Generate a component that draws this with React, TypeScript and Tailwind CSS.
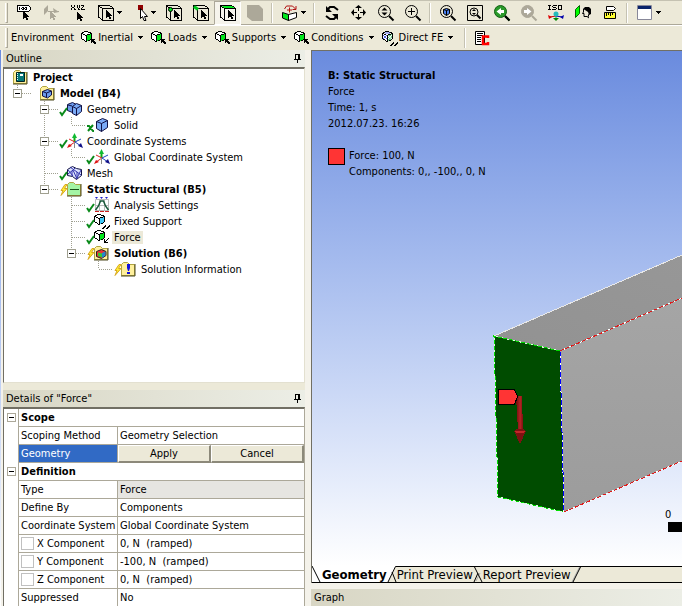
import { FC, ReactElement, ReactNode, useState } from "react";

interface IChildrenProps {
  children?: ReactNode;
}

interface IToolProps {
  label: string;
  icon: ReactElement;
}

interface ITreeItem {
  label: string;
  icon: ReactElement;
  guides: string[];
  status?: string;
  bold?: boolean;
  selected?: boolean;
}

interface IDetailRow {
  label: string;
  value: string;
  checkable?: boolean;
  readOnly?: boolean;
}

const PIXEL_COLORS: Record<string, string> = {
  "#": "#000000",
  g: "#00e81c",
  w: "#ffffff",
  c: "#40c8f8",
  b: "#5060e0",
  t: "#70c890",
  r: "#900000",
  s: "#aca899"
};

const Icon: FC<IChildrenProps> = ({ children }): ReactElement => (
  <svg
    width="16"
    height="16"
    viewBox="0 0 16 16"
    fill="none"
    stroke="#000"
    className="block shrink-0 overflow-visible"
    aria-hidden="true"
  >
    {children}
  </svg>
);

// Draws small bitmaps, one character for each pixel
const Pixels: FC<{ rows: string[] }> = ({ rows }): ReactElement => (
  <g stroke="none" shapeRendering="crispEdges">
    {rows.map((row, y) =>
      row
        .split("")
        .map((key, x) =>
          PIXEL_COLORS[key] ? (
            <rect key={`${x}-${y}`} x={x} y={y} width="1" height="1" fill={PIXEL_COLORS[key]} />
          ) : null
        )
    )}
  </g>
);

const cursorRows: string[] = [
  "#......",
  "##.....",
  "###....",
  "####...",
  "#####..",
  "######.",
  "####...",
  "#..##..",
  "...##.."
];

const Caret: FC = (): ReactElement => (
  <svg
    width="5"
    height="3"
    viewBox="0 0 5 3"
    shapeRendering="crispEdges"
    className="shrink-0"
    aria-hidden="true"
  >
    <path d="M0 0h5v1H0zM1 1h3v1H1zM2 2h1v1H2z" />
  </svg>
);

const TagIcon = (
  <Icon>
    <Pixels
      rows={[
        "############..",
        "#wwwwwwwwwww#.",
        "#w#ww##w##www#",
        "#w#w#w##w#www#",
        "#w#ww##w##www#",
        "#wwwwwwwwwww#.",
        "############.."
      ]}
    />
    <g transform="translate(6 6)">
      <Pixels rows={cursorRows} />
    </g>
  </Icon>
);

const GhostPickIcon = (
  <Icon>
    <path d="M0 4l4-4v6l-4 4zM4 6h11v1H4zM9 3l6 4-5 1z" fill="#aca899" stroke="none" />
    <g transform="translate(6 6)">
      <Pixels rows={cursorRows.map((row) => row.replace(/#/g, "s"))} />
    </g>
  </Icon>
);

const CoordsIcon = (
  <Icon>
    <Pixels
      rows={[
        "#..#..#.#.###",
        "#..#..#.#...#",
        ".##...#.#..#.",
        "#..#...#..#..",
        "#..##..##.####"
      ]}
    />
    <g transform="translate(6 7)">
      <Pixels rows={cursorRows} />
    </g>
  </Icon>
);

const SelectBox: FC<IChildrenProps> = ({ children }): ReactElement => (
  <Icon>
    <Pixels
      rows={[
        "############....",
        "##..........##..",
        "#.##..........#.",
        "#...############",
        "#...#..........#",
        "#...#..........#",
        "#...#..........#",
        "#...#..........#",
        "#...#..........#",
        "#...#..........#",
        "#...#..........#",
        "#...#..........#",
        "##..#..........#",
        "..#.#..........#",
        "...##..........#",
        "....############"
      ]}
    />
    {children}
    <g transform="translate(8 5)">
      <Pixels rows={cursorRows} />
    </g>
  </Icon>
);

const ArrowIcon = (
  <Icon>
    <Pixels rows={["......rrrrr", "......rrrrr", "......rrrrr", "......rrrrr", "......rrrrr"]} />
    <path d="M8.500 3.500v10l2-2 1.500 4h2l-1.500-4h3z" fill="#fff" />
  </Icon>
);

const BlockIcon = (
  <Icon>
    <path d="M0 0h12l4 4v12H5l-5-4z" fill="#aca899" stroke="none" />
  </Icon>
);

const RotateCubeIcon = (
  <Icon>
    <path d="M0.500 7.500l6 2v6l-6-2.500z" fill="#00e81c" />
    <path d="M6.500 9.500l8-2v5l-8 3z" fill="#fff" />
    <path d="M2.500 4l2-3h6l3 3M14 1v3.500h-3.500M7.500 2.500v5M5 5h5" stroke="#b01010" />
  </Icon>
);

const RotateIcon = (
  <Icon>
    <path d="M4 4l2-2h4l4 3M12 12l-2 2H6l-4-3" strokeWidth="2" />
    <path d="M2 1v6h6zM14 15V9H8z" fill="#000" stroke="none" />
  </Icon>
);

const PanIcon = (
  <Icon>
    <path d="M7.500 0l3.500 3H4zM7.500 15l3.500-3H4zM0 7.500L3 4v7zM15 7.500L12 4v7z" fill="#000" stroke="none" />
    <path d="M7.500 3v3M7.500 9v3M3 7.500h3M9 7.500h3" />
  </Icon>
);

const Lens: FC<IChildrenProps & { fill?: string; color?: string }> = ({
  children,
  fill = "none",
  color = "#000"
}): ReactElement => (
  <Icon>
    <circle cx="6.500" cy="6.500" r="6" fill={fill} stroke={color} />
    <path d="M11 11l4.500 4.500" stroke={color} strokeWidth="2" />
    {children}
  </Icon>
);

const BoxZoomIcon = (
  <Icon>
    <path d="M0.500 0.500h15v15H0.500z" />
    <circle cx="7" cy="7" r="4" />
    <path d="M10 10l3.500 3.500" strokeWidth="2" />
    <path d="M5 6l2-2 2 2zM5 8l2 2 2-2z" fill="#000" stroke="none" />
  </Icon>
);

const IsoIcon = (
  <Icon>
    <Pixels
      rows={[
        "###..####.####",
        ".#..#.....#..#",
        ".#...###..#..#",
        ".#......#.#..#",
        "###.####..####"
      ]}
    />
    <path d="M8 9v6" stroke="#088" />
    <path d="M8 11l-6 1" stroke="#c00" />
    <path d="M0 10l1 4 3-2z" fill="#d00" stroke="none" />
    <path d="M8 11l6 1" stroke="#00a" />
    <path d="M16 10l-1 4-3-2z" fill="#00a" stroke="none" />
    <path d="M5 13h6l-3 3z" fill="#080" stroke="none" />
    <circle cx="8" cy="9" r="2.500" fill="#2bb" stroke="none" />
  </Icon>
);

const LookAtIcon = (
  <Icon>
    <path d="M0.500 4.500l4-4v8l-4 4z" fill="#0f0" stroke="#060" />
    <path d="M8 4l2-2h4l2 2v5l-2 1-1-3-3-2z" fill="#000" stroke="none" />
    <path d="M8.500 4v3l-1 1.500h1.500v3h3l2 1.500M14 9l-1 3" />
  </Icon>
);

const RulerIcon = (
  <Icon>
    <path d="M4.500 1.500h7l2 2-2 2h-7z" fill="#fff" />
    <path d="M2.500 7.500h11v6h-11z" fill="#ff3" />
    <path d="M4.500 8v3M6.500 8v2M8.500 8v3M10.500 8v2" />
  </Icon>
);

const WindowIcon = (
  <Icon>
    <path d="M0.500 0.500h14v14H0.500z" fill="#fff" stroke="#889" />
    <path d="M1 1h13v3H1z" fill="#0a246a" stroke="none" />
  </Icon>
);

const cubeRows: string[] = [
  "...####........",
  ".##wwww###.....",
  "##wwwwwww##....",
  "#w##ww###f#....",
  "#www##ffff#....",
  "#wwww#ffff#....",
  "#wwww#ffff#....",
  "#wwww#ffff#....",
  ".##ww#fff#.....",
  "...#w#f##......",
  "....##........."
];

const LoadIcon: FC<{ face?: string; mark?: string; mesh?: boolean }> = ({
  face = "g",
  mark = "pointer",
  mesh
}): ReactElement => (
  <Icon>
    <g transform="translate(0 1)">
      <Pixels rows={cubeRows.map((row) => row.replace(/f/g, face))} />
    </g>
    {mesh && <path d="M1 5l4 4M1 9l4-4M3 3l5 0" stroke="#5060e0" />}
    {mesh && <path d="M6 6l4 3M6 9l4-4" stroke="#fff" />}
    {mark === "pointer" && (
      <g transform="translate(10 9)">
        <Pixels rows={["####..", "###...", "####..", "#.###.", "...##."]} />
      </g>
    )}
    {mark === "arrow" && (
      <g transform="translate(10 9)">
        <Pixels rows={["....#.", "#..#..", "#.#...", "##....", "####.."]} />
      </g>
    )}
    {mark === "hatch" && (
      <g transform="translate(8 12)">
        <Pixels rows={["...#...#", "..##..##", ".##..##.", "##..##.."]} />
      </g>
    )}
  </Icon>
);

const CommandIcon = (
  <Icon>
    <path d="M0.500 1.500h9v13h-9z" fill="#fff" />
    <path d="M2 3.500h6M2 5.500h6M2 7.500h4M2 9.500h4M2 11.500h4" />
    <path d="M13 8V6.500H8V14h5v-2" stroke="#f00" strokeWidth="2.500" />
  </Icon>
);

const Folder: FC<IChildrenProps & { fill?: string }> = ({
  children,
  fill = "#fff09c"
}): ReactElement => (
  <Icon>
    <path d="M0.500 3.500l2-2h4l2 2h5v11H0.500z" fill={fill} stroke="#b0a440" />
    <path d="M14 3v12H0" stroke="#4c4820" />
    {children}
  </Icon>
);

const cubeBody = (
  <>
    <path d="M2.500 4.500l6-3 5 2v7l-6 4-5-3z" fill="#7aaaf5" stroke="#114" />
    <path d="M2.500 4.500l5 2 6-3M7.500 6.500v8" stroke="#114" />
  </>
);

const ProjectIcon = (
  <Folder>
    <path d="M3.500 3.500h8v9h-8z" fill="#087878" stroke="#022" />
    <path d="M7 5h3v2H7z" fill="#fff" stroke="none" />
    <path d="M4.500 4v8" stroke="#dff" strokeDasharray="1 1" />
  </Folder>
);

const ModelIcon = (
  <Folder>
    <path d="M2.500 6.500l5-2 4 1.500v4l-4 3-5-2z" fill="#6c9bec" stroke="#114" />
    <path d="M2.500 6.500l4 1.500 5-2M6.500 8v4.500" stroke="#114" />
  </Folder>
);

const GeometryIcon = (
  <Icon>
    <path d="M0.500 3.500l5-2 4 2v6l-4 2-5-2z" fill="#6c9bec" stroke="#114" />
    <path d="M5.500 5.500l4-3 5 2v6l-5 4-4-2z" fill="#7aaaf5" stroke="#114" />
    <path d="M5.500 5.500l4 2 5-3M9.500 7.500v7M1 4l4 1" stroke="#114" />
  </Icon>
);

const SolidIcon = <Icon>{cubeBody}</Icon>;

const AxesIcon = (
  <Icon>
    <path d="M7.500 9V3" stroke="#1a1" strokeWidth="2" />
    <path d="M7.500 0L5 5h5z" fill="#1b3" stroke="none" />
    <path d="M8 9l-6 4M8 9L2 6" stroke="#d22" />
    <path d="M0 15l2-4 3 2z" fill="#d11" stroke="none" />
    <path d="M8 9l6 4M8 9l6-3" stroke="#24b" />
    <path d="M16 15l-5-2 3-3z" fill="#118" stroke="none" />
    <path d="M7.500 9v6" stroke="#888" />
  </Icon>
);

const MeshIcon = (
  <Icon>
    <path d="M0.500 4.500l5-3 4 2 5 1v6l-5 4-4-3-5-1z" fill="#dde4ff" stroke="#114" />
    <path d="M1 5l5 6M1 9l5-4M3 2l7 5M6 5l4 9M10 7l4 3M10 13l4-8M8 3L5 6v5M10 7v7" stroke="#33a" />
  </Icon>
);

const StaticIcon = (
  <Folder fill="#a4f4a4">
    <path d="M3 8.500h9" stroke="#185018" />
  </Folder>
);

const AnalysisIcon = (
  <Icon>
    <path d="M1.500 2.500h13v11h-13zM5.500 2v12M10.500 2v12M1 8.500h14" stroke="#bbb" />
    <path d="M1.500 13l3-4 2-5h3l2 5 3 4" stroke="#185838" strokeWidth="1.500" />
    <path d="M1 0h3l-1.500 2zM6 0h3L7.500 2zM11 0h3l-1.500 2z" fill="#22c" stroke="none" />
    <path d="M1 14.500h4M6 14.500h4M11 14.500h4" stroke="#c22" />
  </Icon>
);

const SolutionIcon = (
  <Folder>
    <path d="M2.500 6.500l5-2 4.500 2v4l-4.500 3-5-2z" fill="#e33" stroke="#222" />
    <path d="M8 8l3.500-1.500v4L8 13z" fill="#28c" stroke="none" />
    <path d="M4 7.500l4 1v4l-4-1.500z" fill="#3c3" stroke="none" />
  </Folder>
);

const InfoIcon = (
  <Folder>
    <path d="M6 3h3v4L8 10H7L6 7zM6 11h3v2H6z" fill="#11d" stroke="none" />
  </Folder>
);

const StatusMark: FC<{ status: string }> = ({ status }): ReactElement => (
  <svg
    width="9"
    height="16"
    viewBox="0 0 9 16"
    fill="none"
    className="absolute top-0 -left-2"
    aria-hidden="true"
  >
    {status === "ok" && <path d="M1 11l2 3 5-7" stroke="#0a8a1a" strokeWidth="2" />}
    {status === "hidden" && (
      <path d="M1 9h2l4 5h1M7 8l-5 6" stroke="#0a8a1a" strokeWidth="2" />
    )}
    {status === "update" && (
      <path d="M6 3.500l-4 6h2l-2 5 6-7H5.500l2.500-4z" fill="#fe3" stroke="#d8a820" />
    )}
  </svg>
);

const Guide: FC<{ kind: string }> = ({ kind }): ReactElement => (
  <svg
    width="27"
    height="16"
    viewBox="0 0 27 16"
    fill="none"
    stroke="#a0a090"
    strokeDasharray="1 1"
    shapeRendering="crispEdges"
    className="block shrink-0"
    aria-hidden="true"
  >
    {/* pipe: passing line, tee: branch, end: last branch; a plus sign means the branch is expandable */}
    {(kind.startsWith("pipe") || kind.startsWith("tee")) && <path d="M13.500 0v16" />}
    {kind.startsWith("end") && <path d="M13.500 0v8" />}
    {(kind.startsWith("tee") || kind.startsWith("end")) && <path d="M14 8.500h13" />}
    {kind.endsWith("+") && (
      <g strokeDasharray="none">
        <path d="M9.500 4.500h8v8h-8z" fill="#fff" />
        <path d="M11 8.500h5" stroke="#000" />
      </g>
    )}
  </svg>
);

const treeItems: ITreeItem[] = [
  { label: "Project", icon: ProjectIcon, guides: [], bold: true },
  { label: "Model (B4)", icon: ModelIcon, guides: ["end+"], bold: true },
  { label: "Geometry", icon: GeometryIcon, guides: ["", "tee+"], status: "ok" },
  { label: "Solid", icon: SolidIcon, guides: ["", "pipe", "end"], status: "hidden" },
  { label: "Coordinate Systems", icon: AxesIcon, guides: ["", "tee+"], status: "ok" },
  { label: "Global Coordinate System", icon: AxesIcon, guides: ["", "pipe", "end"], status: "ok" },
  { label: "Mesh", icon: MeshIcon, guides: ["", "tee"], status: "ok" },
  { label: "Static Structural (B5)", icon: StaticIcon, guides: ["", "end+"], status: "update", bold: true },
  { label: "Analysis Settings", icon: AnalysisIcon, guides: ["", "", "tee"], status: "ok" },
  { label: "Fixed Support", icon: <LoadIcon face="c" mark="hatch" />, guides: ["", "", "tee"], status: "ok" },
  { label: "Force", icon: <LoadIcon mark="arrow" />, guides: ["", "", "tee"], status: "ok", selected: true },
  { label: "Solution (B6)", icon: SolutionIcon, guides: ["", "", "end+"], status: "update", bold: true },
  { label: "Solution Information", icon: InfoIcon, guides: ["", "", "", "end"], status: "update" }
];

const definitionRows: IDetailRow[] = [
  { label: "Type", value: "Force", readOnly: true },
  { label: "Define By", value: "Components" },
  { label: "Coordinate System", value: "Global Coordinate System" },
  { label: "X Component", value: "0, N  (ramped)", checkable: true },
  { label: "Y Component", value: "-100, N  (ramped)", checkable: true },
  { label: "Z Component", value: "0, N  (ramped)", checkable: true },
  { label: "Suppressed", value: "No" }
];

const Tool: FC<IToolProps & { pressed?: boolean }> = ({ label, icon, pressed }): ReactElement => (
  <button
    type="button"
    aria-label={label}
    aria-pressed={pressed}
    className={`flex h-6 w-[27px] shrink-0 items-center justify-center ${
      pressed ? "border border-t-[#aca899] border-r-white border-b-white border-l-[#aca899] bg-[#f6f4ec]" : ""
    }`}
  >
    {icon}
  </button>
);

const DropTool: FC<IToolProps> = ({ label, icon }): ReactElement => (
  <button
    type="button"
    aria-label={label}
    className="flex h-6 w-[34px] shrink-0 items-center gap-[3px] pl-[6px]"
  >
    {icon}
    <Caret />
  </button>
);

const MenuTool: FC<IToolProps> = ({ label, icon }): ReactElement => (
  <button type="button" className="flex h-6 shrink-0 items-center pr-2">
    {icon}
    <span className="mr-[5px] ml-px">{label}</span>
    <Caret />
  </button>
);

const Separator: FC = (): ReactElement => (
  <div className="flex w-2 shrink-0 justify-center">
    <div className="h-5 w-[2px] border-r border-l border-r-white border-l-[#c5c2b2]" />
  </div>
);

const Grip: FC = (): ReactElement => (
  <div className="mr-[3px] ml-[5px] h-5 w-[3px] shrink-0 border-r border-b border-l border-r-[#aca899] border-b-[#aca899] border-l-white" />
);

const PanelTitle: FC<IChildrenProps & { pin?: boolean }> = ({ children, pin }): ReactElement => (
  <div className="flex h-[17px] shrink-0 items-center justify-between bg-linear-to-r from-[#d8d6c4] to-[#eceee6] px-[3px]">
    <h2>{children}</h2>
    {pin && (
      <button type="button" aria-label="Auto hide" className="pr-px">
        <svg
          width="7"
          height="9"
          viewBox="0 0 7 9"
          fill="none"
          stroke="#000"
          shapeRendering="crispEdges"
          aria-hidden="true"
        >
          <path d="M1.500 5V0.500h4V5M4.500 1v4M0 5.500h7M3.500 6v3" />
        </svg>
      </button>
    )}
  </div>
);

const Outline: FC = (): ReactElement => (
  <section>
    <PanelTitle pin>Outline</PanelTitle>
    <ul className="h-[316px] overflow-hidden border-t-2 border-r border-b border-l border-t-[#716f64] border-r-[#e3e0d0] border-b-[#e3e0d0] border-l-[#716f64] bg-white">
      {treeItems.map((item) => (
        <li key={item.label} className="flex h-4 items-center">
          {item.guides.map((kind, index) => (
            <Guide key={index} kind={kind} />
          ))}
          <span className="relative ml-[9px]">
            {item.icon}
            {item.status && <StatusMark status={item.status} />}
          </span>
          <span
            className={`ml-[2px] px-[2px] ${item.bold ? "font-bold" : ""} ${
              item.selected ? "bg-[#ece9d8]" : ""
            }`}
          >
            {item.label}
          </span>
        </li>
      ))}
    </ul>
  </section>
);

const SectionRow: FC<{ title: string; rows: number }> = ({ title, rows }): ReactElement => (
  <tr className="h-[18px]">
    <td rowSpan={rows} className="border-r border-[#aca899] align-top">
      <button
        type="button"
        aria-label={`Collapse ${title}`}
        className="mt-1 ml-[3px] flex h-[9px] w-[9px] items-center justify-center border border-[#aca899]"
      >
        <span className="h-px w-[5px] bg-black" />
      </button>
    </td>
    <th colSpan={2} scope="colgroup" className="border-b border-[#aca899] pl-[2px] text-left font-bold">
      {title}
    </th>
  </tr>
);

const Details: FC = (): ReactElement => {
  const [checked, setChecked] = useState<string[]>([]);

  const onToggle = (label: string): void => {
    setChecked((current) =>
      current.includes(label) ? current.filter((name) => name !== label) : [...current, label]
    );
  };

  return (
    <section className="mt-[7px] flex min-h-0 flex-1 flex-col">
      <PanelTitle pin>Details of "Force"</PanelTitle>
      <div className="min-h-0 flex-1 overflow-hidden border-t-2 border-r border-l border-t-[#716f64] border-r-[#aca899] border-l-[#716f64] bg-white">
        <table className="w-full table-fixed border-separate border-spacing-0">
          <colgroup>
            <col className="w-[15px]" />
            <col className="w-[99px]" />
            <col />
          </colgroup>
          <tbody>
            <SectionRow title="Scope" rows={3} />
            <tr className="h-[18px]">
              <th scope="row" className="border-r border-b border-[#aca899] pl-[2px] text-left font-normal">
                Scoping Method
              </th>
              <td className="border-b border-[#aca899] pl-[2px]">Geometry Selection</td>
            </tr>
            <tr className="h-[18px]">
              <th
                scope="row"
                className="border-r border-b border-[#aca899] bg-[#316ac5] pl-[2px] text-left font-normal text-white"
              >
                Geometry
              </th>
              <td>
                <div className="grid h-[18px] grid-cols-2">
                  <button
                    type="button"
                    className="border-t border-r-2 border-b-2 border-l border-t-white border-r-[#8c897a] border-b-[#8c897a] border-l-white bg-[#ece9d8]"
                  >
                    Apply
                  </button>
                  <button
                    type="button"
                    className="border-t border-r-2 border-b-2 border-l border-t-white border-r-[#8c897a] border-b-[#8c897a] border-l-white bg-[#ece9d8]"
                  >
                    Cancel
                  </button>
                </div>
              </td>
            </tr>
            <SectionRow title="Definition" rows={8} />
            {definitionRows.map((row) => (
              <tr key={row.label} className="h-[18px]">
                <th
                  scope="row"
                  className="border-r border-b border-[#aca899] pl-[2px] text-left font-normal whitespace-nowrap"
                >
                  {row.checkable ? (
                    <label className="flex items-center gap-[3px]">
                      <input
                        type="checkbox"
                        checked={checked.includes(row.label)}
                        onChange={() => onToggle(row.label)}
                        className="h-[13px] w-[13px] appearance-none border border-[#c0c0c0] bg-white checked:bg-[#316ac5]"
                      />
                      {row.label}
                    </label>
                  ) : (
                    row.label
                  )}
                </th>
                <td
                  className={`border-b border-[#aca899] pl-[2px] whitespace-pre ${
                    row.readOnly ? "bg-[#e6e5e1]" : ""
                  }`}
                >
                  {row.value}
                </td>
              </tr>
            ))}
          </tbody>
        </table>
      </div>
    </section>
  );
};

const Beam: FC = (): ReactElement => (
  <svg
    width="190"
    height="300"
    viewBox="0 0 190 300"
    fill="none"
    shapeRendering="crispEdges"
    className="absolute top-[200px] left-[181px] overflow-visible"
    role="img"
    aria-label="Beam loaded on its end face"
  >
    <defs>
      <linearGradient id="beamTop" x1="0" y1="1" x2="1" y2="0">
        <stop offset="0" stopColor="#929292" />
        <stop offset="1" stopColor="#a0a0a0" />
      </linearGradient>
      <linearGradient id="beamSide" x1="0" y1="0" x2="0" y2="1">
        <stop offset="0" stopColor="#acacac" />
        <stop offset="1" stopColor="#9c9c9c" />
      </linearGradient>
      <linearGradient id="arrowShaft" x1="0" y1="0" x2="1" y2="0">
        <stop offset="0" stopColor="#6c0c0c" />
        <stop offset="0.600" stopColor="#b42424" />
        <stop offset="1" stopColor="#7c1010" />
      </linearGradient>
    </defs>
    <path d="M1 85L189 4 569-160V-116L189 47 67 100z" fill="url(#beamTop)" />
    <path d="M67 100L189 47 569-116V46L189 210 71 261z" fill="url(#beamSide)" />
    <path d="M1 85L189 4 569-160" stroke="#e8e8e8" />
    <path d="M67 100L189 47 569-116M71 261L189 210 569 46" stroke="#fff" />
    <path
      d="M67 100L189 47 569-116M71 261L189 210 569 46"
      stroke="#e01818"
      strokeDasharray="4 2"
    />
    <path d="M1 85l66 15 4 161-66-15z" fill="#004c00" />
    <path d="M67 100L1 85l4 161 66 15" stroke="#d8ffd8" />
    <path d="M67 100L1 85l4 161 66 15" stroke="#0d0" strokeDasharray="4 2" />
    <path d="M67 100l4 161" stroke="#fff" />
    <path d="M67 100l4 161" stroke="#00f" strokeDasharray="5 2" />
    <path d="M23 145h6l1 34h-5z" fill="url(#arrowShaft)" />
    <path d="M21 180l3-2h6l3 2-6 13z" fill="#7c1212" />
    <path d="M21 180h12l-3 2h-6z" fill="#c02828" />
    <path d="M5.500 138.500h16l3 7-3 8h-16z" fill="#ff3434" stroke="#000" />
  </svg>
);

const ViewTabs: FC = (): ReactElement => (
  <div className="flex h-[17px] shrink-0 items-stretch border-b border-black text-[13px]">
    <svg width="10" height="16" fill="none" stroke="#000" className="shrink-0 bg-white" aria-hidden="true">
      <path d="M0 0l8 16" />
    </svg>
    <button type="button" className="bg-white font-bold">
      Geometry
    </button>
    <svg width="10" height="16" fill="none" stroke="#000" className="shrink-0" aria-hidden="true">
      <path d="M0 0h9L1 16H0z" fill="#fff" stroke="none" />
      <path d="M1 16L8.500 0.500H10M5 6l4 10" />
    </svg>
    <button type="button" className="border-t border-black">
      Print Preview
    </button>
    <svg width="10" height="16" fill="none" stroke="#000" className="shrink-0" aria-hidden="true">
      <path d="M3 15l4-8" stroke="#aaa" />
      <path d="M0 0.500h10M1 0l8 16M1 16l4-9" />
    </svg>
    <button type="button" className="border-t border-black">
      Report Preview
    </button>
    <svg width="12" height="16" fill="none" stroke="#000" className="shrink-0" aria-hidden="true">
      <path d="M1 16l8-16" stroke="#aaa" />
      <path d="M0 0.500h12M2 16l8-16" />
    </svg>
    <div className="flex-1 border-t border-black" />
  </div>
);

const GraphicsView: FC = (): ReactElement => (
  <div className="relative min-h-0 flex-1 overflow-hidden bg-linear-to-b from-[#6a8bde] to-white">
    <Beam />
    <div className="relative pt-[17px] pl-4">
      <h1 className="leading-4 font-bold">B: Static Structural</h1>
      <p className="leading-4">Force</p>
      <p className="leading-4">Time: 1, s</p>
      <p className="leading-4">2012.07.23. 16:26</p>
      <div className="mt-4 flex gap-1">
        <div className="h-[17px] w-[17px] border border-black bg-[#ff3434]" />
        <div className="leading-4">
          <p>Force: 100, N</p>
          <p>Components: 0,, -100,, 0, N</p>
        </div>
      </div>
    </div>
    <div className="absolute top-[457px] left-[353px] w-[200px]">
      <p className="leading-[14px]">0</p>
      <div className="ml-[3px] h-[10px] bg-black" />
    </div>
  </div>
);

const App: FC = (): ReactElement => (
  <div className="flex h-screen flex-col overflow-hidden bg-[#ece9d8] font-['DejaVu_Sans_Condensed','DejaVu_Sans',sans-serif] text-[11px] leading-[13px] text-black">
    <header className="shrink-0">
      <div className="flex h-[25px] items-center border-t border-b border-t-[#c5c2b2] border-b-[#aca899]">
        <Grip />
        <Tool label="Label" icon={TagIcon} />
        <Tool label="Direction" icon={GhostPickIcon} />
        <Tool label="Coordinates" icon={CoordsIcon} />
        <DropTool label="Select type" icon={<SelectBox />} />
        <DropTool label="Select mode" icon={ArrowIcon} />
        <Tool
          label="Vertex"
          icon={
            <SelectBox>
              <circle cx="4.500" cy="4.500" r="2" fill="#00e81c" />
            </SelectBox>
          }
        />
        <Tool
          label="Edge"
          icon={
            <SelectBox>
              <path d="M1 1.500l4 3" stroke="#00c81c" strokeWidth="3" />
            </SelectBox>
          }
        />
        <Tool
          label="Face"
          pressed
          icon={
            <SelectBox>
              <path d="M1.500 1h10l3.500 2H4.500z" fill="#00e81c" stroke="none" />
            </SelectBox>
          }
        />
        <Tool label="Body" icon={BlockIcon} />
        <Separator />
        <DropTool label="View orientation" icon={RotateCubeIcon} />
        <Separator />
        <Tool label="Rotate" icon={RotateIcon} />
        <Tool label="Pan" icon={PanIcon} />
        <Tool
          label="Zoom"
          icon={
            <Lens>
              <path d="M6.500 2.500l3 3h-6zM6.500 10.500l3-3h-6z" fill="#000" stroke="none" />
            </Lens>
          }
        />
        <Tool
          label="Zoom in"
          icon={
            <Lens>
              <path d="M3 6.500h7M6.500 3v7" />
            </Lens>
          }
        />
        <Separator />
        <Tool
          label="Zoom to fit"
          icon={
            <Lens>
              <path d="M3.500 4.500l3-1 3 1v4l-3 2-3-2z" fill="#4a80f0" />
              <path d="M3.500 4.500l3 1 3-1M6.500 5.500v5" />
            </Lens>
          }
        />
        <Tool label="Box zoom" icon={BoxZoomIcon} />
        <Tool
          label="Previous view"
          icon={
            <Lens fill="#2a9a2a" color="#126012">
              <path d="M2.500 6.500L7 3v2h3v3H7v2z" fill="#fff" stroke="none" />
              <path d="M11 11l4.500 4.500" stroke="#000" strokeWidth="2" />
            </Lens>
          }
        />
        <Tool
          label="Next view"
          icon={
            <Lens fill="#aca899" color="#aca899">
              <path d="M10.500 6.500L6 3v2H3v3h3v2z" fill="#fff" stroke="none" />
            </Lens>
          }
        />
        <Tool label="Isometric view" icon={IsoIcon} />
        <Tool label="Look at" icon={LookAtIcon} />
        <Tool label="Ruler" icon={RulerIcon} />
        <Separator />
        <DropTool label="Viewports" icon={WindowIcon} />
      </div>
      <div className="flex h-[25px] items-center border-t border-b border-t-white border-b-[#ece9d8]">
        <Grip />
        <span className="mr-[7px] shrink-0">Environment</span>
        <MenuTool label="Inertial" icon={<LoadIcon />} />
        <MenuTool label="Loads" icon={<LoadIcon />} />
        <MenuTool label="Supports" icon={<LoadIcon />} />
        <MenuTool label="Conditions" icon={<LoadIcon />} />
        <MenuTool label="Direct FE" icon={<LoadIcon face="t" mark="hatch" mesh />} />
        <Separator />
        <Tool label="Commands" icon={CommandIcon} />
      </div>
    </header>

    <main className="flex min-h-0 flex-1">
      <div className="w-px shrink-0 bg-linear-to-b from-[#6a8bde] to-white" />
      <aside className="flex w-[310px] shrink-0 flex-col border-r-[6px] border-l-2 border-[#f4f2ea]">
        <Outline />
        <Details />
      </aside>
      <div className="flex min-w-0 flex-1 flex-col">
        <div className="flex min-h-0 flex-1 flex-col border-t border-l border-[#716f64]">
          <GraphicsView />
          <ViewTabs />
        </div>
        <div className="h-[6px] shrink-0 bg-[#f4f2ea]" />
        <PanelTitle>Graph</PanelTitle>
      </div>
    </main>
  </div>
);

export default App;
